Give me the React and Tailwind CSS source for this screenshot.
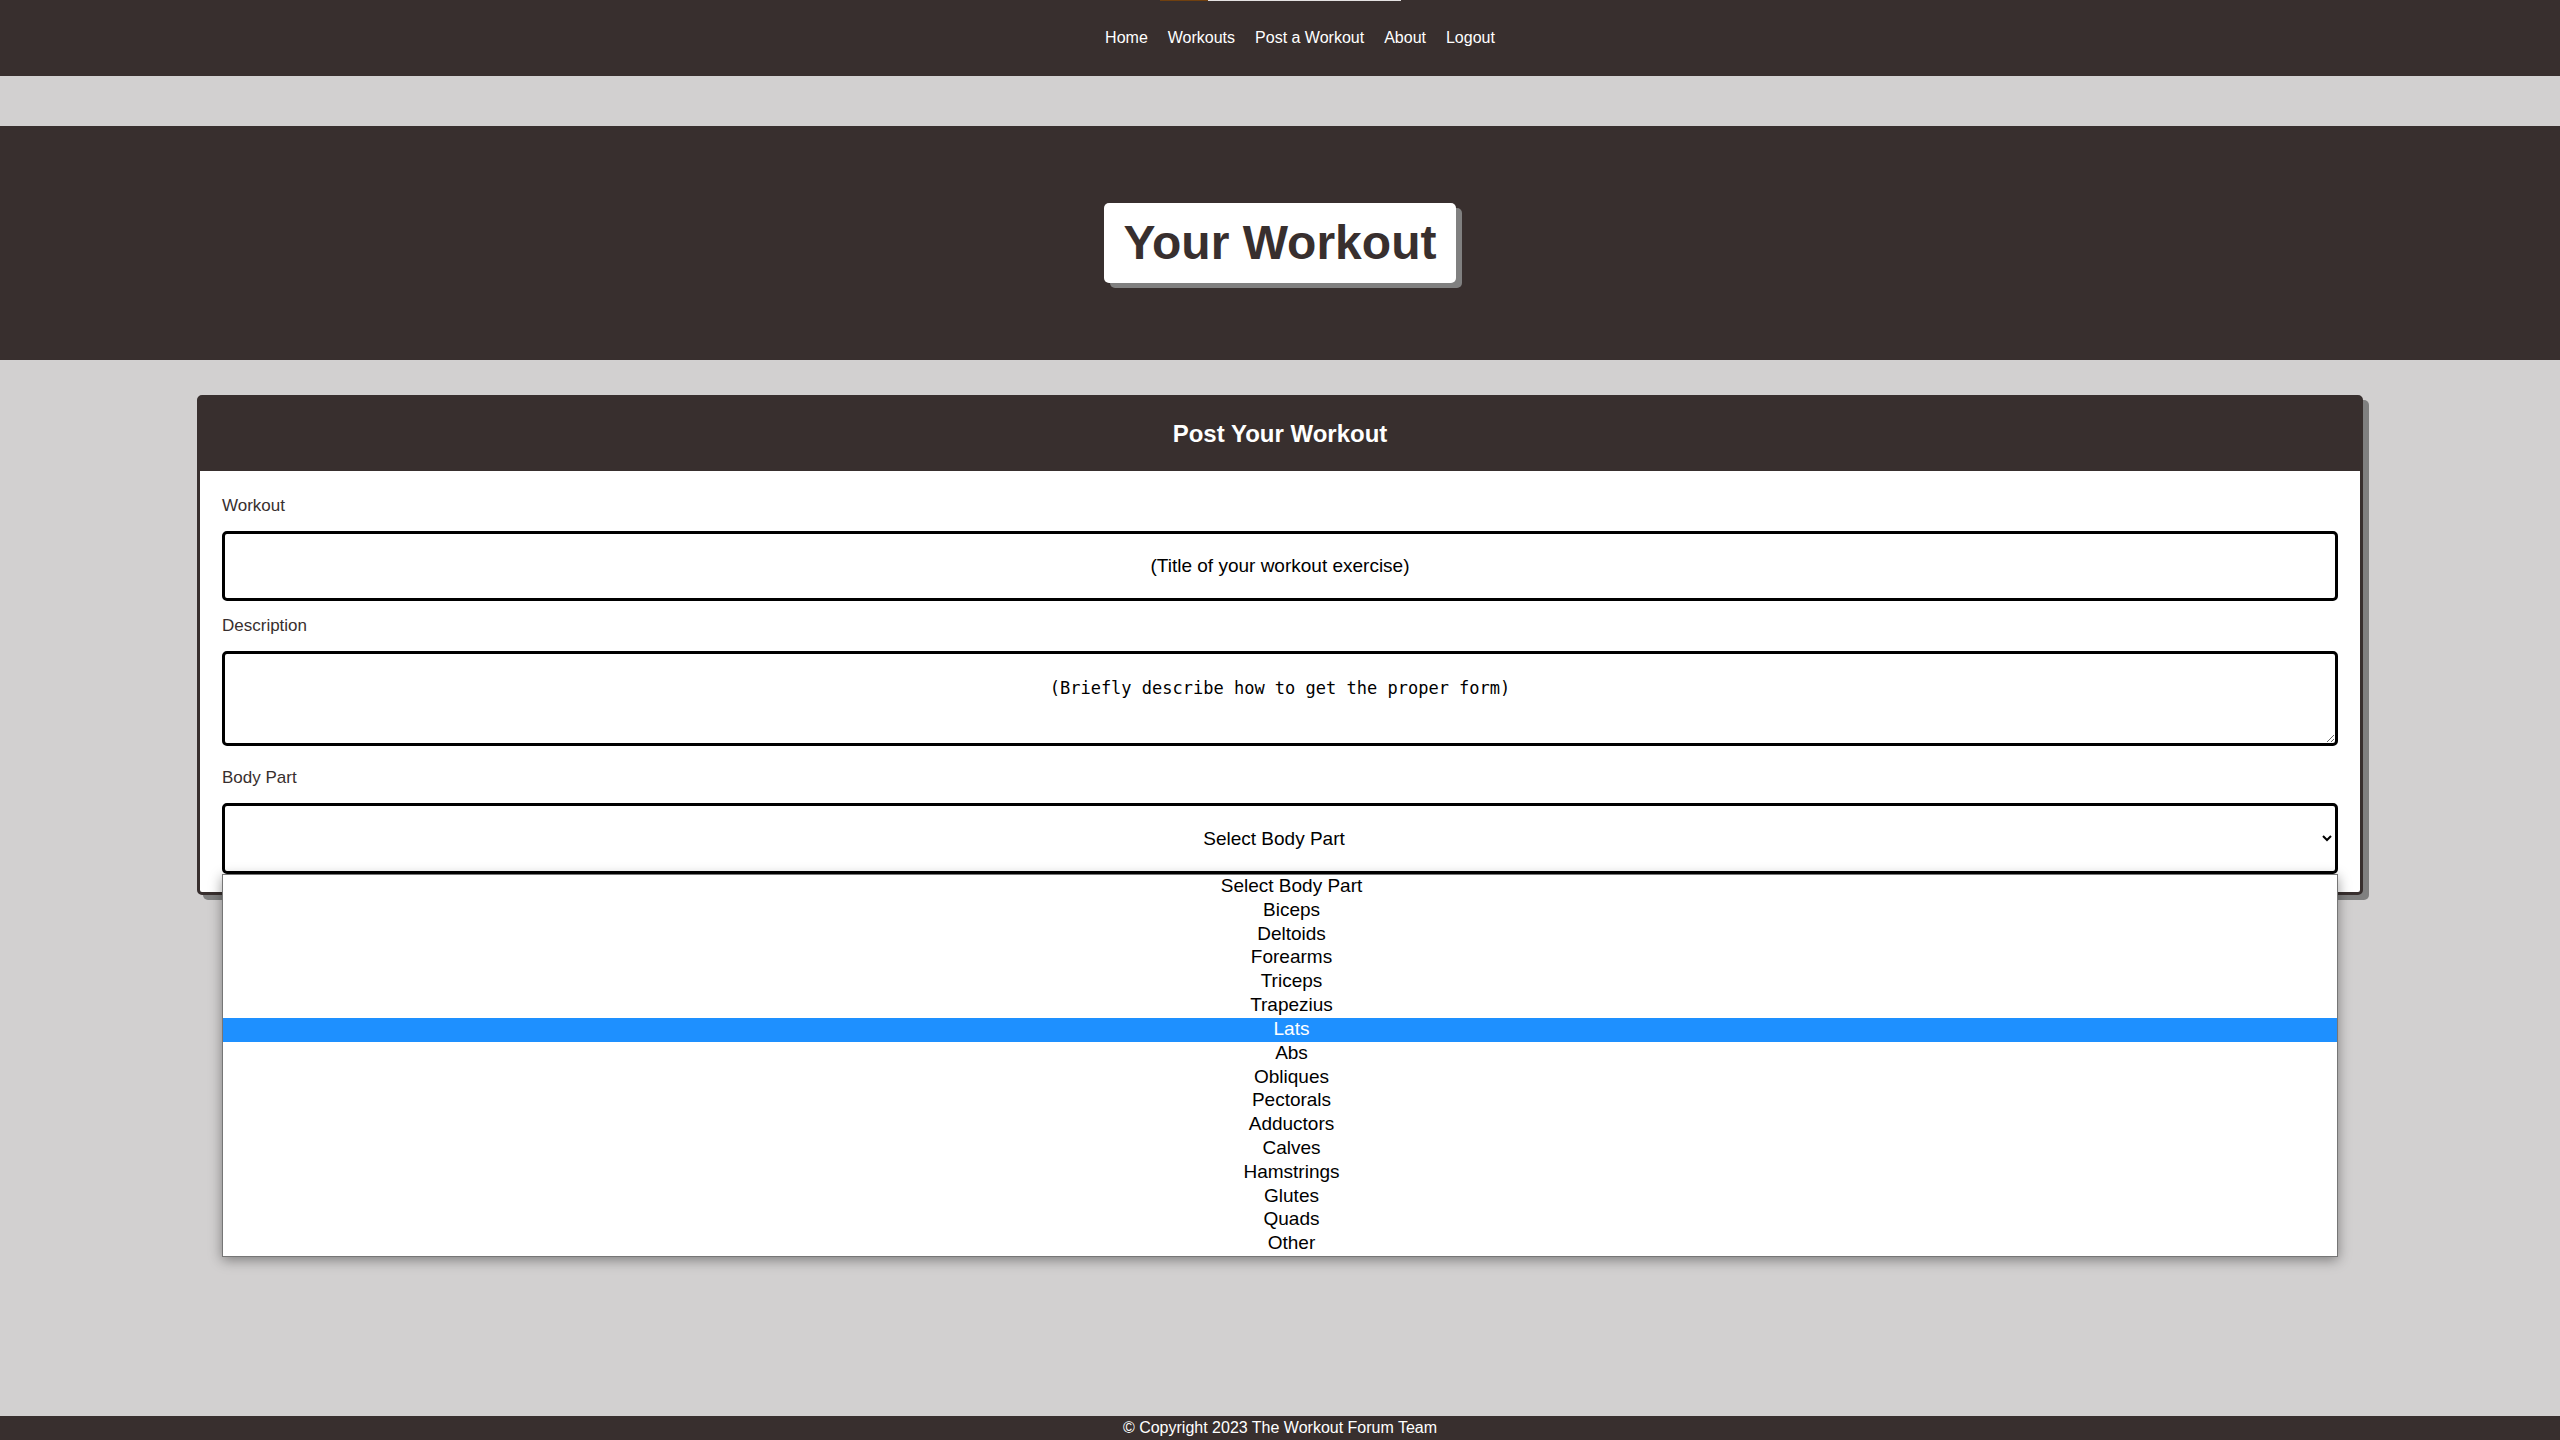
import React from "react";

const links = ["Home", "Workouts", "Post a Workout", "About", "Logout"];

const bodyParts = [
  "Select Body Part",
  "Biceps",
  "Deltoids",
  "Forearms",
  "Triceps",
  "Trapezius",
  "Lats",
  "Abs",
  "Obliques",
  "Pectorals",
  "Adductors",
  "Calves",
  "Hamstrings",
  "Glutes",
  "Quads",
  "Other",
];

const labelClass = "mb-[13px] block text-[17px] leading-6 text-[#382f2e]";
const fieldClass =
  "block w-full rounded-[5px] border-3 border-black bg-white px-5 text-center text-black placeholder:text-black placeholder:opacity-100 outline-none";

function Nav() {
  return (
    <header className="relative flex h-[76px] items-center justify-center bg-[#382f2e] pl-10">
      <div className="absolute left-[1160px] top-0 flex h-px">
        <span className="w-12 bg-[#70400f]" />
        <span className="w-[193px] bg-[#e4e2e2]" />
      </div>
      <nav className="flex gap-5 text-base leading-6 text-white">
        {links.map((link) => (
          <a key={link} href="#">
            {link}
          </a>
        ))}
      </nav>
    </header>
  );
}

function Options() {
  return (
    <ul
      role="listbox"
      aria-label="Body parts"
      className="absolute inset-x-0 top-full z-10 grid h-[383px] auto-rows-fr border border-[#767676] bg-white text-center text-[19px] leading-[22px] text-black shadow-[0_3px_12px_rgba(0,0,0,0.4)]"
    >
      {bodyParts.map((part) => (
        <li
          key={part}
          role="option"
          aria-selected={part === "Lats"}
          className="pl-[23px] aria-selected:bg-[#1e90ff] aria-selected:text-white"
        >
          {part}
        </li>
      ))}
    </ul>
  );
}

export default function App() {
  return (
    <div className="flex min-h-screen flex-col bg-[#d2d0d0] font-['Liberation_Sans',Arial,sans-serif]">
      <Nav />
      <section className="mt-[50px] flex justify-center bg-[#382f2e] py-[77px]">
        <h1 className="rounded-[5px] bg-white px-5 py-2.5 text-5xl leading-[60px] font-bold text-[#382f2e] shadow-[6px_5px_0_gray]">
          Your Workout
        </h1>
      </section>
      <main className="mx-[197px] mt-[35px] flex-1">
        <form className="rounded-[5px] border-3 border-[#382f2e] bg-white shadow-[6px_5px_0_gray]">
          <h2 className="bg-[#382f2e] pb-[21px] pt-5 text-center text-2xl leading-8 font-bold text-white">
            Post Your Workout
          </h2>
          <div className="px-[22px] pb-[18px] pt-[23px]">
            <label htmlFor="workout" className={labelClass}>
              Workout
            </label>
            <input
              id="workout"
              type="text"
              placeholder="(Title of your workout exercise)"
              className={`${fieldClass} mb-[13px] h-[70px] text-[19px]`}
            />
            <label htmlFor="description" className={labelClass}>
              Description
            </label>
            <textarea
              id="description"
              placeholder="(Briefly describe how to get the proper form)"
              className={`${fieldClass} mb-5 h-[95px] resize py-[22px] font-['DejaVu_Sans_Mono',monospace] text-[17px] leading-6`}
            />
            <label htmlFor="body-part" className={labelClass}>
              Body Part
            </label>
            <div className="relative">
              <select id="body-part" className={`${fieldClass} h-[71px] text-[19px]`}>
                {bodyParts.map((part) => (
                  <option key={part}>{part}</option>
                ))}
              </select>
              <Options />
            </div>
          </div>
        </form>
      </main>
      <footer className="bg-[#382f2e] text-center text-base leading-6 text-white">
        © Copyright 2023 The Workout Forum Team
      </footer>
    </div>
  );
}
